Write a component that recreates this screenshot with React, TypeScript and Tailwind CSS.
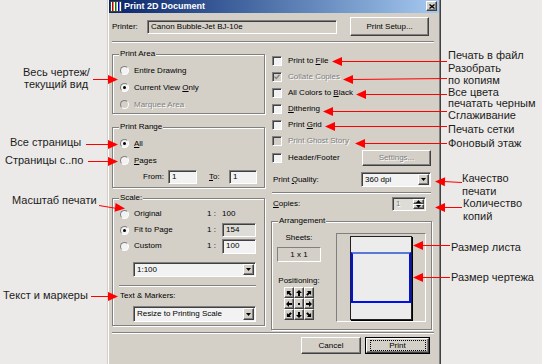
import React from 'react'

// classic win2k bevels
const sunken = 'border border-t-[#808080] border-l-[#808080] border-r-white border-b-white shadow-[inset_1px_1px_#404040]'
const raised = 'border border-t-white border-l-white border-r-[#404040] border-b-[#404040] shadow-[inset_-1px_-1px_#808080]'
const etched = 'h-[2px] border-t border-b border-t-[#808080] border-b-white'
const grey = 'text-[#808080] [text-shadow:1px_1px_0_#fff]'

const Radio = ({ on = false, off = false }: { on?: boolean; off?: boolean }) => (
    <span className={`w-[9px] h-[9px] shrink-0 rounded-full flex items-center justify-center border border-t-[#808080] border-l-[#808080] border-r-white border-b-white ${off ? 'bg-[#d4d0c8]' : 'bg-[#f2f2f2]'}`}>
        {on && <span className="w-[3px] h-[3px] rounded-full bg-black" />}
    </span>
)

const Check = ({ on = false, off = false }: { on?: boolean; off?: boolean }) => (
    <span className={`w-[10px] h-[10px] shrink-0 flex items-center justify-center ${sunken} ${off ? 'bg-[#d4d0c8]' : 'bg-[#f2f2f2]'}`}>
        {on && (
            <svg width="6" height="6" viewBox="0 0 6 6">
                <path d="M0.5 2.6 L2.3 4.5 L5.5 0.8" fill="none" stroke={off ? '#808080' : '#000'} strokeWidth="1.3" />
            </svg>
        )}
    </span>
)

const Arrow = ({ up = false }: { up?: boolean }) => (
    <svg width="5" height="3" viewBox="0 0 5 3">
        <path d={up ? 'M0 3H5L2.5 0Z' : 'M0 0H5L2.5 3Z'} fill="#000" />
    </svg>
)

const Combo = ({ value, className = '' }: { value: string; className?: string }) => (
    <div className={`flex items-center p-[1px] bg-[#f2f2f2] ${sunken} ${className}`}>
        <span className="flex-1 pl-[2px] whitespace-nowrap">{value}</span>
        <span className={`w-[11px] self-stretch flex items-center justify-center bg-[#d4d0c8] ${raised}`}>
            <Arrow />
        </span>
    </div>
)

const Btn = ({ children, className = '', off = false }: { children: React.ReactNode; className?: string; off?: boolean }) => (
    <button type="button" className={`flex items-center justify-center bg-[#d4d0c8] ${raised} ${off ? grey : ''} ${className}`}>
        {children}
    </button>
)

const Group = ({ label, className = '', children }: { label: string; className?: string; children: React.ReactNode }) => (
    <div className={`relative border border-[#808080] shadow-[inset_1px_1px_#fff,1px_1px_#fff] ${className}`}>
        <span className="absolute -top-[6px] left-[6px] px-[1px] bg-[#d4d0c8] whitespace-nowrap">{label}</span>
        {children}
    </div>
)

const notes = [
    { cls: 'left-[23px] top-[66px]', t: 'Весь чертеж/' },
    { cls: 'left-[24px] top-[78px]', t: 'текущий вид' },
    { cls: 'left-[10px] top-[136px]', t: 'Все страницы' },
    { cls: 'left-[5px] top-[154px]', t: 'Страницы с..по' },
    { cls: 'left-[12px] top-[194px]', t: 'Масштаб печати' },
    { cls: 'left-[3px] top-[289px]', t: 'Текст и маркеры' },
    { cls: 'left-[448px] top-[49px]', t: 'Печать в файл' },
    { cls: 'left-[448px] top-[62px]', t: 'Разобрать' },
    { cls: 'left-[448px] top-[74px]', t: 'по копиям' },
    { cls: 'left-[448px] top-[86px]', t: 'Все цвета' },
    { cls: 'left-[448px] top-[97px]', t: 'печатать черным' },
    { cls: 'left-[448px] top-[109px]', t: 'Сглаживание' },
    { cls: 'left-[448px] top-[123px]', t: 'Печать сетки' },
    { cls: 'left-[448px] top-[137px]', t: 'Фоновый этаж' },
    { cls: 'left-[462px] top-[172px]', t: 'Качество' },
    { cls: 'left-[462px] top-[185px]', t: 'печати' },
    { cls: 'left-[463px] top-[197px]', t: 'Количество' },
    { cls: 'left-[463px] top-[210px]', t: 'копий' },
    { cls: 'left-[451px] top-[241px]', t: 'Размер листа' },
    { cls: 'left-[451px] top-[271px]', t: 'Размер чертежа' },
]

// x1,y1 (tail at the note) -> x2,y2 (tip)
const arrows: [number, number, number, number][] = [
    [93, 79, 118, 79],
    [86, 144, 118, 144],
    [88, 161, 118, 161],
    [99, 205, 125, 208],
    [91, 296, 118, 296],
    [447, 61, 332, 61],
    [447, 78, 343, 79],
    [447, 94, 356, 94],
    [447, 111, 323, 111],
    [447, 126, 325, 126],
    [447, 143, 355, 143],
    [462, 182, 435, 181],
    [462, 207, 435, 207],
    [450, 245, 413, 245],
    [450, 277, 413, 277],
]

const head = (x1: number, y1: number, x2: number, y2: number) => {
    const len = Math.hypot(x2 - x1, y2 - y1)
    const ux = (x2 - x1) / len
    const uy = (y2 - y1) / len
    const bx = x2 - ux * 10
    const by = y2 - uy * 10
    return `${x2},${y2} ${bx - uy * 4.5},${by + ux * 4.5} ${bx + uy * 4.5},${by - ux * 4.5}`
}

const posAngles = [-45, 0, 45, -90, null, 90, -135, 180, 135]

const App = () => {
    return (
        <div className="relative w-[542px] h-[364px] overflow-hidden bg-[#ebeae8] flex text-[8px] leading-[10px] text-black font-['Liberation_Sans',Arial,sans-serif]">
            <div className="w-[107px] shrink-0" />

            {/* dialog */}
            <div className="w-[334px] shrink-0 -mt-[3px] self-start bg-[#d4d0c8] border border-t-[#d4d0c8] border-l-[#d4d0c8] border-r-[#404040] border-b-[#404040] shadow-[inset_1px_1px_#fff,inset_-1px_-1px_#808080] p-[1px]">
                {/* title bar */}
                <div className="h-[14px] flex items-center bg-linear-to-r from-[#0a246a] to-[#a6caf0]">
                    <svg width="12" height="11" viewBox="0 0 12 11" className="ml-[1px]">
                        <rect x="0.5" y="0.5" width="11" height="10" fill="#fff" stroke="#404040" />
                        <rect x="2" y="1" width="1.5" height="9" fill="#c00000" />
                        <rect x="5" y="1" width="1.5" height="9" fill="#008000" />
                        <rect x="8" y="1" width="1.5" height="9" fill="#0000c0" />
                    </svg>
                    <span className="ml-[2px] text-white font-bold text-[9px] leading-[12px]">Print 2D Document</span>
                    <button type="button" className={`ml-auto mr-[2px] w-[11px] h-[10px] flex items-center justify-center bg-[#d4d0c8] ${raised}`}>
                        <svg width="6" height="5" viewBox="0 0 6 5">
                            <path d="M0.5 0.5L5.5 4.5M5.5 0.5L0.5 4.5" stroke="#000" strokeWidth="1.3" />
                        </svg>
                    </button>
                </div>

                <div className="pl-[3px] pr-[5px]">
                    {/* printer */}
                    <div className="mt-[4px] h-[19px] flex items-center">
                        <span className="w-[35px]">Printer:</span>
                        <div className={`w-[190px] h-[14px] flex items-center pl-[3px] ${sunken}`}>Canon Bubble-Jet BJ-10e</div>
                        <Btn className="ml-[13px] w-[79px] h-[19px]">Print Setup...</Btn>
                    </div>

                    <div className={`mt-[5px] ${etched}`} />

                    <div className="flex gap-[6px] items-start">
                        {/* left column */}
                        <div className="w-[153px] pt-[11px] flex flex-col">
                            <Group label="Print Area" className="h-[60px] pt-[7px] pl-[7px]">
                                <div className="flex items-center gap-[5px] h-[17px]"><Radio /><span>Entire Drawing</span></div>
                                <div className="flex items-center gap-[5px] h-[17px]"><Radio on /><span>Current View <u>O</u>nly</span></div>
                                <div className="flex items-center gap-[5px] h-[17px]"><Radio off /><span className={grey}>Marquee Area</span></div>
                            </Group>

                            <Group label="Print Range" className="mt-[13px] h-[61px] pt-[7px] pl-[7px]">
                                <div className="flex items-center gap-[5px] h-[17px]"><Radio on /><span><u>A</u>ll</span></div>
                                <div className="flex items-center gap-[5px] h-[17px]"><Radio /><span><u>P</u>ages</span></div>
                                <div className="mt-[1px] flex items-center h-[14px] pl-[23px]">
                                    <span className="w-[25px]">From:</span>
                                    <div className={`w-[29px] h-[14px] flex items-center pl-[3px] bg-[#f2f2f2] ${sunken}`}>1</div>
                                    <span className="ml-[12px] w-[20px]"><u>T</u>o:</span>
                                    <div className={`w-[28px] h-[14px] flex items-center pl-[3px] bg-[#f2f2f2] ${sunken}`}>1</div>
                                </div>
                            </Group>

                            <Group label="Scale:" className="mt-[10px] h-[128px] pt-[7px] pl-[7px]">
                                <div className="flex items-center h-[16px]">
                                    <Radio /><span className="ml-[5px] w-[73px]">Original</span>
                                    <span className="w-[15px]">1 :</span><span>100</span>
                                </div>
                                <div className="flex items-center h-[16px]">
                                    <Radio on /><span className="ml-[5px] w-[73px]">Fit to Page</span>
                                    <span className="w-[15px]">1 :</span>
                                    <div className={`w-[34px] h-[14px] flex items-center pl-[3px] bg-[#dedcd6] ${sunken}`}>154</div>
                                </div>
                                <div className="flex items-center h-[16px]">
                                    <Radio /><span className="ml-[5px] w-[73px]">Custom</span>
                                    <span className="w-[15px]">1 :</span>
                                    <div className={`w-[34px] h-[15px] flex items-center pl-[3px] bg-[#f2f2f2] ${sunken}`}>100</div>
                                </div>
                                <Combo value="1:100" className="mt-[8px] ml-[13px] w-[123px] h-[15px]" />
                                <div className={`mt-[8px] -ml-[1px] w-[137px] ${etched}`} />
                                <div className="mt-[4px] h-[10px]">Text &amp; Markers:</div>
                                <Combo value="Resize to Printing Scale" className="mt-[5px] ml-[13px] w-[123px] h-[16px]" />
                            </Group>
                        </div>

                        {/* right column */}
                        <div className="w-[161px] pt-[9px] flex flex-col">
                            <div className="pl-[1px]">
                                <div className="flex items-center gap-[6px] h-[17px]"><Check /><span>Print to <u>F</u>ile</span></div>
                                <div className="flex items-center gap-[6px] h-[16px]"><Check on off /><span className={grey}>Collate Copies</span></div>
                                <div className="flex items-center gap-[6px] h-[16px]"><Check /><span>All Colors to <u>B</u>lack</span></div>
                                <div className="flex items-center gap-[6px] h-[16px]"><Check /><span><u>D</u>ithering</span></div>
                                <div className="flex items-center gap-[6px] h-[16px]"><Check /><span>Print <u>G</u>rid</span></div>
                                <div className="flex items-center gap-[6px] h-[16px]"><Check off /><span className={grey}>Print Ghost Story</span></div>
                                <div className="flex items-center gap-[6px] h-[17px]">
                                    <Check /><span>Header/Footer</span>
                                    <Btn off className="ml-auto mr-[1px] w-[69px] h-[16px]">Settings...</Btn>
                                </div>
                            </div>

                            <div className="mt-[6px] h-[15px] flex items-center pl-[2px]">
                                <span className="w-[88px]">Print <u>Q</u>uality:</span>
                                <Combo value="360 dpi" className="w-[70px] h-[15px]" />
                            </div>

                            <div className={`mt-[5px] ml-[1px] w-[159px] ${etched}`} />

                            <div className="mt-[3px] h-[14px] flex items-center pl-[2px]">
                                <span className="w-[119px]"><u>C</u>opies:</span>
                                <div className={`w-[34px] h-[14px] flex items-stretch p-[1px] bg-[#dedcd6] ${sunken}`}>
                                    <span className={`flex-1 flex items-center pl-[2px] ${grey}`}>1</span>
                                    <div className="w-[11px] flex flex-col">
                                        <span className={`flex-1 flex items-center justify-center bg-[#d4d0c8] ${raised}`}><Arrow up /></span>
                                        <span className={`flex-1 flex items-center justify-center bg-[#d4d0c8] ${raised}`}><Arrow /></span>
                                    </div>
                                </div>
                            </div>

                            <Group label="Arrangement" className="mt-[10px] h-[109px]">
                                <div className="flex pt-[11px] pl-[5px]">
                                    <div className="w-[44px] flex flex-col items-center">
                                        <span className="h-[10px]">Sheets:</span>
                                        <div className="mt-[4px] w-[44px] h-[15px] flex items-center justify-center border border-t-[#808080] border-l-[#808080] border-r-white border-b-white">1 x 1</div>
                                        <span className="mt-[14px] h-[10px] whitespace-nowrap">Positioning:</span>
                                        <div className="mt-[1px] grid grid-cols-3">
                                            {posAngles.map((a, i) => (
                                                <span key={i} className={`w-[10px] h-[11px] flex items-center justify-center bg-[#d4d0c8] ${raised}`}>
                                                    {a === null ? (
                                                        <span className="w-[2px] h-[2px] bg-black" />
                                                    ) : (
                                                        <svg width="6" height="6" viewBox="0 0 6 6">
                                                            <path d="M3 0L6 3H4V6H2V3H0Z" fill="#000" transform={`rotate(${a} 3 3)`} />
                                                        </svg>
                                                    )}
                                                </span>
                                            ))}
                                        </div>
                                    </div>

                                    {/* preview */}
                                    <div className="ml-[15px] w-[90px] h-[89px] flex items-center justify-center border border-t-[#808080] border-l-[#808080] border-r-white border-b-white">
                                        <div className="w-[62px] h-[84px] bg-[#ececec] border border-[#202020] shadow-[1px_1px_#000] pt-[15px]">
                                            <div className="h-[51px] border-2 border-[#0010e8] border-t-[#5a78d8]" />
                                        </div>
                                    </div>
                                </div>
                            </Group>
                        </div>
                    </div>

                    <div className={`mt-[2px] ${etched}`} />

                    <div className="mt-[3px] flex justify-end gap-[4px] pr-[4px]">
                        <Btn className="w-[60px] h-[17px]">Cancel</Btn>
                        <button type="button" className="w-[65px] h-[17px] border border-black bg-[#d4d0c8] p-0">
                            <div className={`h-full flex items-center justify-center ${raised}`}>
                                <span className="w-[56px] h-[11px] flex items-center justify-center border border-dotted border-black">Print</span>
                            </div>
                        </button>
                    </div>
                    <div className="h-[12px]" />
                </div>
            </div>

            {/* callouts */}
            {notes.map((n, i) => (
                <span key={i} className={`absolute whitespace-nowrap text-[11px] leading-[12px] text-[#1c1c1c] ${n.cls}`}>{n.t}</span>
            ))}
            <svg width="542" height="364" viewBox="0 0 542 364" className="absolute left-0 top-0 pointer-events-none">
                {arrows.map(([x1, y1, x2, y2], i) => (
                    <g key={i}>
                        <line x1={x1} y1={y1 + 0.5} x2={x2 - (x2 > x1 ? 8 : -8)} y2={y2 + 0.5} stroke="#ff0000" strokeWidth="1" />
                        <polygon points={head(x1, y1 + 0.5, x2, y2 + 0.5)} fill="#ff0000" />
                    </g>
                ))}
            </svg>
        </div>
    )
}

export default App
